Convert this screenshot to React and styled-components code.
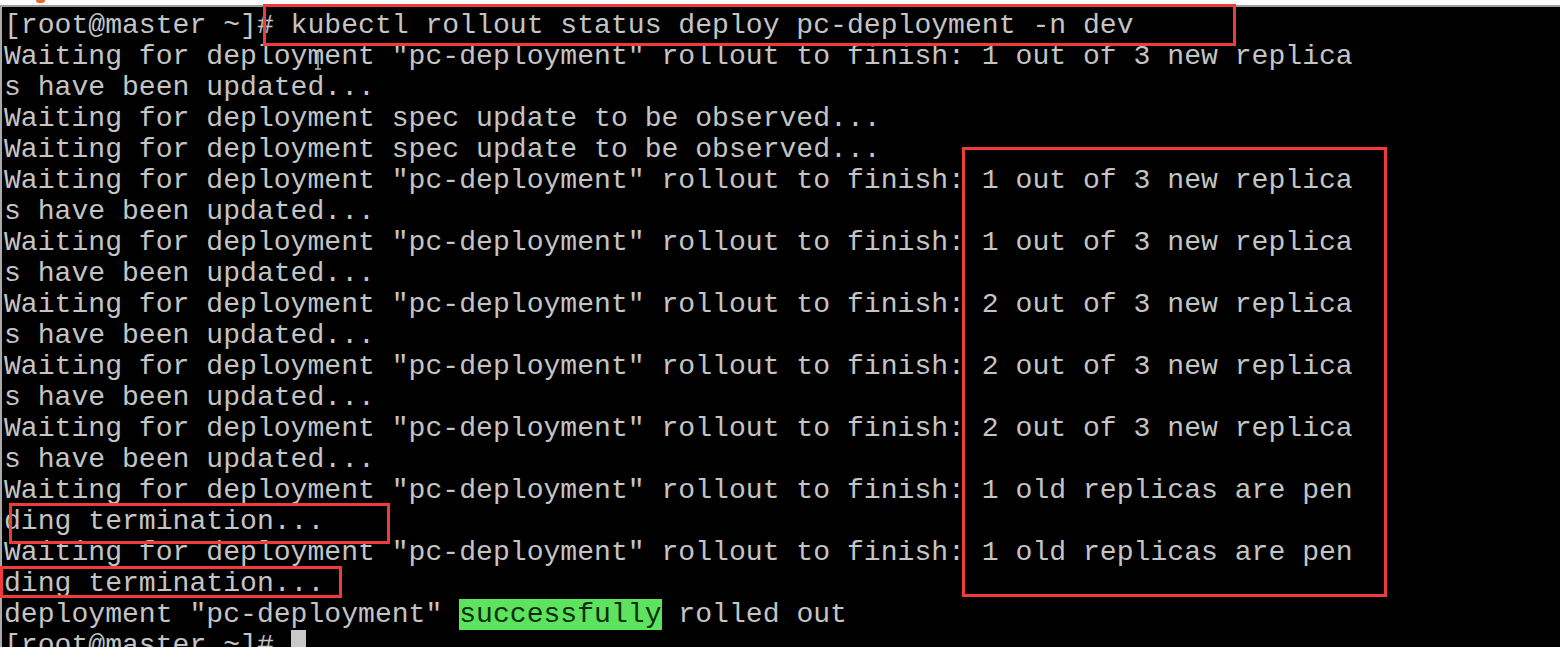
import React from "react"
import styled, { createGlobalStyle } from "styled-components"

const GlobalStyle = createGlobalStyle`
html, body {
  margin: 0;
  padding: 0;
  background: #000;
  overflow: hidden;
}
`

const Screen = styled.div`
position: relative;
width: 1560px;
height: 647px;
overflow: hidden;
background: #000;
display: flex;
flex-direction: column;
`

const TopStrip = styled.div`
height: 5px;
flex-shrink: 0;
background: #fbfbfb;
border-bottom: 2px solid #9c9c9c;
display: flex;
align-items: flex-start;
padding-left: 36px;
`

const TabMark = styled.div`
width: 9px;
height: 3px;
border-radius: 0 0 3px 3px;
background: #e8692c;
`

const Terminal = styled.div`
flex: 1;
border-left: 2px solid #a9a9a9;
padding: 3px 0 0 2px;
font-family: "Liberation Mono", "Courier New", monospace;
font-size: 28.1px;
color: #c4c4c4;
`

const Line = styled.div`
height: 31px;
line-height: 31px;
white-space: pre;
`

const Highlight = styled.span`
background: #5ee35e;
color: #0a2e0a;
`

const Cursor = styled.span`
display: inline-block;
width: 15px;
height: 31px;
vertical-align: top;
background: #c9c9c9;
`

const Box = styled.div`
position: absolute;
border: 3px solid #f03b3b;
box-sizing: border-box;
pointer-events: none;
left: ${p => p.$x}px;
top: ${p => p.$y}px;
width: ${p => p.$w}px;
height: ${p => p.$h}px;
`

const Pointer = styled.svg`
position: absolute;
left: 313px;
top: 50px;
`

const W = 'Waiting for deployment "pc-deployment" rollout to finish: '
const lines = [
  "[root@master ~]# kubectl rollout status deploy pc-deployment -n dev",
  W + "1 out of 3 new replica",
  "s have been updated...",
  "Waiting for deployment spec update to be observed...",
  "Waiting for deployment spec update to be observed...",
  W + "1 out of 3 new replica",
  "s have been updated...",
  W + "1 out of 3 new replica",
  "s have been updated...",
  W + "2 out of 3 new replica",
  "s have been updated...",
  W + "2 out of 3 new replica",
  "s have been updated...",
  W + "2 out of 3 new replica",
  "s have been updated...",
  W + "1 old replicas are pen",
  "ding termination...",
  W + "1 old replicas are pen",
  "ding termination...",
]

const boxes = [
  { x: 263, y: 4, w: 973, h: 42 },
  { x: 962, y: 147, w: 425, h: 450 },
  { x: 9, y: 503, w: 381, h: 41 },
  { x: 0, y: 566, w: 342, h: 32 },
]

export default function App() {
  return (
    <>
      <GlobalStyle />
      <Screen>
        <TopStrip>
          <TabMark />
        </TopStrip>
        <Terminal>
          {lines.map((text, i) => (
            <Line key={i}>{text}</Line>
          ))}
          <Line>
            {'deployment "pc-deployment" '}
            <Highlight>successfully</Highlight>
            {" rolled out"}
          </Line>
          <Line>
            {"[root@master ~]# "}
            <Cursor />
          </Line>
        </Terminal>
        {boxes.map((b, i) => (
          <Box key={i} $x={b.x} $y={b.y} $w={b.w} $h={b.h} />
        ))}
        <Pointer width="10" height="20" viewBox="0 0 10 20">
          <path d="M2 1h6M5 1v18M2 19h6" stroke="#bdbdbd" strokeWidth="1.4" fill="none" />
        </Pointer>
      </Screen>
    </>
  )
}
